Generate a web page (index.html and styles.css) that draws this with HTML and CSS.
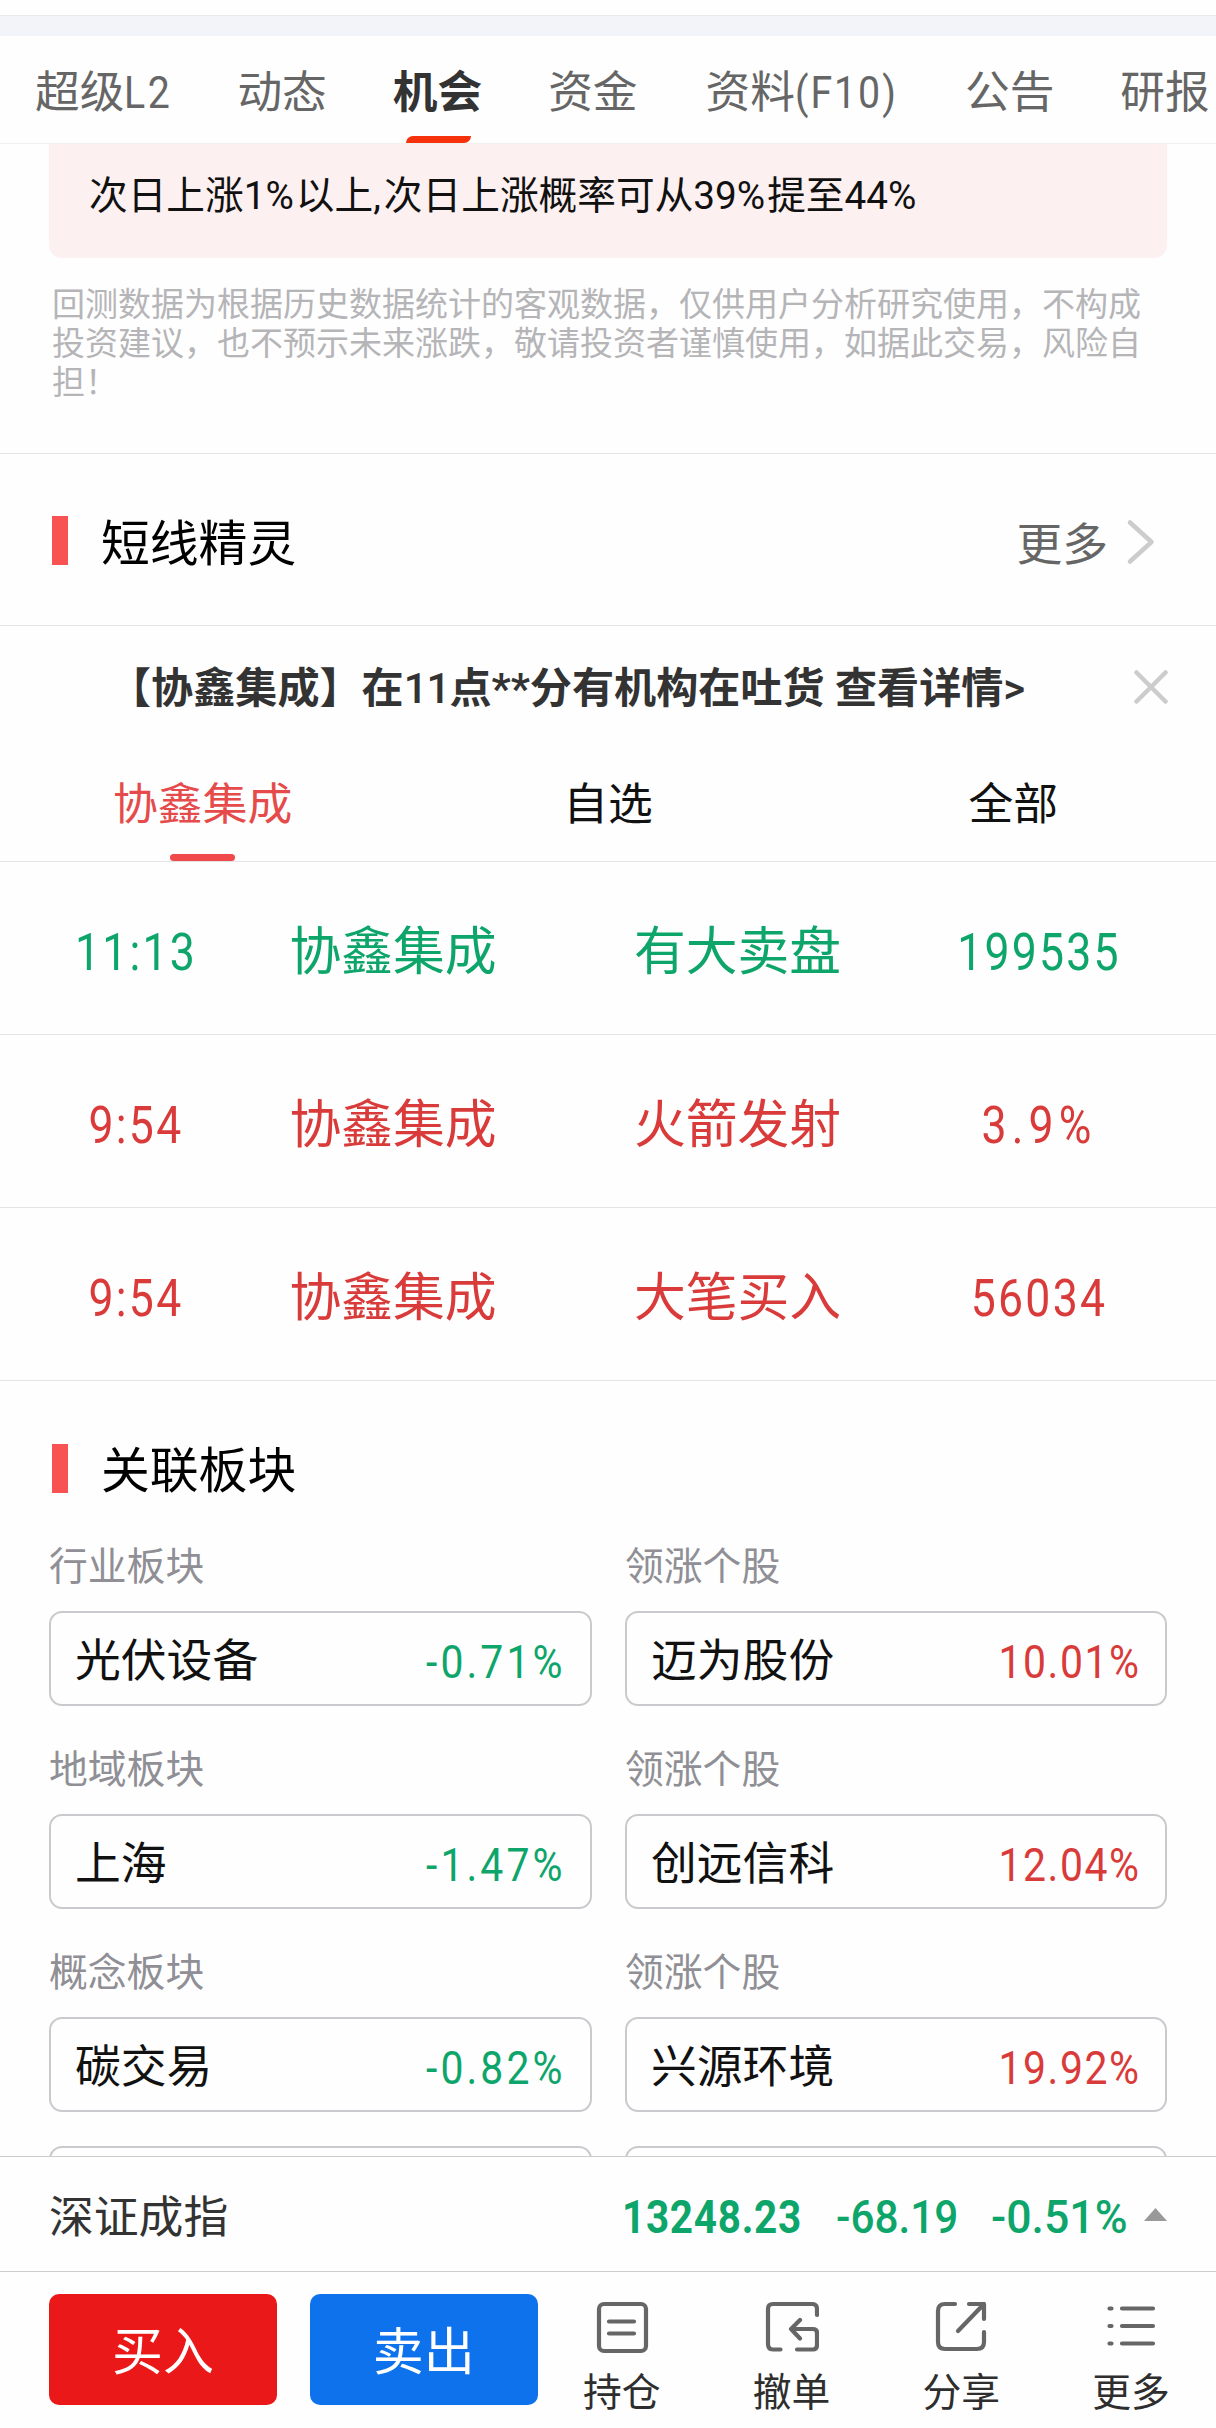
FILE: index.html
```html
<!DOCTYPE html>
<html lang="zh-CN">
<head>
<meta charset="utf-8">
<title>协鑫集成</title>
<link rel="stylesheet" href="styles.css">
</head>
<body>
<div class="app">
  <div class="band"></div>
  <nav class="tabs">
    <span class="tab">超级<span class="lat">L2</span></span>
    <span class="tab">动态</span>
    <span class="tab active">机会</span>
    <span class="tab">资金</span>
    <span class="tab info">资料<span class="lat f10">(F10)</span></span>
    <span class="tab">公告</span>
    <span class="tab">研报</span>
  </nav>

  <main class="content">
    <section class="backtest">
      <div class="tip">次日上涨1<span class="pc">%</span>以上<span class="comma">,</span>次日上涨概率可从39<span class="pc">%</span>提至44<span class="pc">%</span></div>
      <p class="disclaimer">回测数据为根据历史数据统计的客观数据，仅供用户分析研究使用，不构成<br>投资建议，也不预示未来涨跌，敬请投资者谨慎使用，如据此交易，风险自<br>担！</p>
    </section>

    <header class="head">
      <i class="bar"></i><h2>短线精灵</h2>
      <span class="more">更多</span>
      <svg class="chev" width="30" height="48" viewBox="0 0 30 48"><path d="M4 4.500L25.500 24L4 43.500" fill="none" stroke="#ccc" stroke-width="4.500" stroke-linecap="round" stroke-linejoin="round"/></svg>
    </header>

    <div class="notice">
      <span class="notice-text">【协鑫集成】在<span class="m">11</span>点<span class="st">**</span>分有机构在吐货 查看详情<span class="m gt">&gt;</span></span>
      <svg width="34" height="34" viewBox="0 0 34 34"><path d="M2.500 2.500L31.500 31.500M31.500 2.500L2.500 31.500" fill="none" stroke="#ccc" stroke-width="4.500" stroke-linecap="round"/></svg>
    </div>

    <div class="subtabs">
      <span class="sub on">协鑫集成</span><span class="sub">自选</span><span class="sub">全部</span>
    </div>

    <div class="row down"><span class="num">11:13</span><span>协鑫集成</span><span>有大卖盘</span><span class="num">199535</span></div>
    <div class="row up"><span class="num">9:54</span><span>协鑫集成</span><span>火箭发射</span><span class="num wide">3.9%</span></div>
    <div class="row up"><span class="num">9:54</span><span>协鑫集成</span><span>大笔买入</span><span class="num">56034</span></div>

    <header class="head related">
      <i class="bar"></i><h2>关联板块</h2>
    </header>
    <section class="sectors">
      <div class="cell"><label>行业板块</label><div class="card"><span>光伏设备</span><b class="down neg">-0.71%</b></div></div>
      <div class="cell"><label>领涨个股</label><div class="card"><span>迈为股份</span><b class="up">10.01%</b></div></div>
      <div class="cell"><label>地域板块</label><div class="card"><span>上海</span><b class="down neg">-1.47%</b></div></div>
      <div class="cell"><label>领涨个股</label><div class="card"><span>创远信科</span><b class="up">12.04%</b></div></div>
      <div class="cell"><label>概念板块</label><div class="card"><span>碳交易</span><b class="down neg">-0.82%</b></div></div>
      <div class="cell"><label>领涨个股</label><div class="card"><span>兴源环境</span><b class="up">19.92%</b></div></div>
      <div class="card"></div>
      <div class="card"></div>
    </section>
  </main>

  <div class="index">
    <span class="index-name">深证成指</span>
    <span class="v price">13248.23</span>
    <span class="v chg">-68.19</span>
    <span class="v pct">-0.51%</span>
    <svg width="23" height="13" viewBox="0 0 23 13"><path d="M11.500 0L23 13H0z" fill="#999"/></svg>
  </div>

  <footer class="actions">
    <div class="btn buy">买入</div>
    <div class="btn sell">卖出</div>
    <div class="tools">
      <div class="tool">
        <svg width="54" height="54" viewBox="0 0 54 54"><rect x="4" y="4" width="47" height="47" rx="5"/><path d="M14 21.500H39M14 33.500H39"/></svg>
        <span>持仓</span>
      </div>
      <div class="tool">
        <svg width="54" height="54" viewBox="0 0 54 54"><path d="M52 15V9Q52 4 47 4H8Q3 4 3 9V44Q3 49.500 8 49.500H15.500M32 49.500H48Q52 49.500 52 45V33Q52 29 48 29H26M35 20L26 29L35 38.500"/></svg>
        <span>撤单</span>
      </div>
      <div class="tool">
        <svg width="54" height="54" viewBox="0 0 54 54"><path d="M21 4H11Q4 4 4 11V42Q4 49 11 49H43Q50 49 50 42V32M35 4H50V19M50 4L24 31"/></svg>
        <span>分享</span>
      </div>
      <div class="tool">
        <svg width="54" height="54" viewBox="0 0 54 54"><path d="M5.500 8.500H7.500M18 8.500H49M5.500 26H7.500M18 26H49M5.500 43.500H7.500M18 43.500H49"/></svg>
        <span>更多</span>
      </div>
    </div>
  </footer>
</div>
</body>
</html>
```
FILE: styles.css
```css
* { box-sizing: border-box; }
body {
  margin: 0;
  background: #fefefe;
  font-family: Roboto, "Noto Sans CJK SC", sans-serif;
  color: #111;
}
svg { display: block; flex: none; }
.app {
  width: 1216px;
  height: 2428px;
  overflow: hidden;
  display: flex;
  flex-direction: column;
}
.band {
  height: 21px;
  margin-top: 15px;
  flex: none;
  background: #f3f4f9;
  border-top: 1px solid #e8e9ec;
}
.tabs {
  height: 108px;
  flex: none;
  display: flex;
  gap: 66px;
  padding-left: 35px;
  border-bottom: 1px solid #f0f0f0;
  font-size: 44.7px;
  line-height: 114px;
  color: #666;
  white-space: nowrap;
}
.tab { position: relative; height: 107px; }
.tab.active { color: #333; font-weight: 700; }
.tab.active::after {
  content: "";
  position: absolute;
  left: 13px;
  bottom: 0;
  width: 65px;
  height: 7px;
  background: #f5320b;
  border-radius: 7px 0 7px 0;
}
.tab.info { margin-left: 2px; }
.lat { display: inline-block; width: 47px; letter-spacing: 3px; transform: scaleX(.88); transform-origin: left; }
.lat.f10 { width: 104px; letter-spacing: 2.2px; }

.content { height: 2012px; flex: none; overflow: hidden; }
.backtest { height: 309px; padding: 0 49px; }
.tip {
  height: 114px;
  padding-left: 40px;
  border-radius: 0 0 13px 13px;
  background: #fdf0f0;
  font-size: 38.7px;
  line-height: 104px;
  white-space: nowrap;
}
.tip .pc { letter-spacing: 2px; }
.tip .comma { letter-spacing: 3px; }
.disclaimer {
  margin: 28px 0 0 3px;
  font-size: 33px;
  line-height: 38.8px;
  color: #b5b5b8;
  white-space: nowrap;
}
.head {
  height: 173px;
  display: flex;
  align-items: center;
  border-top: 1px solid #e4e4e4;
  border-bottom: 1px solid #e4e4e4;
  padding: 0 60px 0 52px;
}
.bar { width: 16px; height: 49px; margin-top: 1px; background: #f95252; }
.head h2 {
  margin: 11px 0 0 33px;
  font-size: 48.8px;
  line-height: 60px;
  font-weight: 400;
  color: #000;
}
.more { margin: 13px 18px 0 auto; font-size: 45.8px; line-height: 60px; color: #666; }
.chev { margin-top: 5px; }
.notice {
  height: 126px;
  display: flex;
  justify-content: space-between;
  align-items: center;
  padding: 0 48px 0 109px;
  font-size: 42.1px;
  line-height: 60px;
  font-weight: 700;
  color: #333;
  white-space: nowrap;
}
.notice svg { margin-bottom: 4px; }
.m { font-weight: 500; letter-spacing: -1px; }
.notice-text { padding-bottom: 1px; }
.subtabs {
  height: 110px;
  display: flex;
  border-bottom: 1px solid #e4e4e4;
  font-size: 44.8px;
  line-height: 105px;
}
.sub { flex: 1; text-align: center; position: relative; }
.sub.on { color: #e54b4b; }
.sub.on::after {
  content: "";
  position: absolute;
  left: calc(50% - 32.5px);
  bottom: 0;
  width: 65px;
  height: 7px;
  border-radius: 4px;
  background: #f04a4a;
}
.row {
  height: 173px;
  display: grid;
  grid-template-columns: 272px 242px 447px 156px;
  border-bottom: 1px solid #e4e4e4;
  font-size: 51.8px;
  line-height: 181px;
  text-align: center;
  white-space: nowrap;
}
.num { letter-spacing: 2.6px; transform: scaleX(.86); margin: 0 -30px; }
.num.wide { letter-spacing: 6px; }
.down { color: #0ea56b; }
.up { color: #d93b3a; }
.head.related { height: 175px; border: 0; }
.head.related .bar { margin-top: 0; }
.head.related h2 { margin-top: 7px; }
.sectors {
  display: grid;
  grid-template-columns: 543px 542px;
  column-gap: 33px;
  padding-left: 49px;
}
.cell { height: 203px; }
.cell:nth-child(5), .cell:nth-child(6) { height: 184px; }
.cell label {
  display: block;
  height: 55px;
  font-size: 38.8px;
  line-height: 21px;
  color: #8f8f95;
}
.card {
  height: 95px;
  display: flex;
  justify-content: space-between;
  border: 2px solid #c9cacd;
  border-radius: 13px;
  padding: 0 24px;
  font-size: 45.8px;
  line-height: 98px;
}
.card b {
  font-size: 46.5px;
  font-weight: 400;
  letter-spacing: 1.8px;
  transform: scaleX(.88);
  transform-origin: right;
}
.card b.neg { letter-spacing: 3.5px; }

.index {
  height: 116px;
  flex: none;
  display: flex;
  align-items: center;
  border-top: 1px solid #ccc;
  border-bottom: 1px solid #ccc;
  padding: 0 49px;
  line-height: 60px;
  color: #333;
}
.index-name { width: 573px; font-size: 44.8px; padding-top: 8px; }
.v { font-size: 46px; font-weight: 500; color: #0ea56b; transform-origin: left; white-space: nowrap; padding-top: 6px; }
.price { width: 214px; font-weight: 700; letter-spacing: .8px; transform: scaleX(.88); }
.chg { width: 155px; transform: scaleX(.92); }
.pct { width: 153px; transform: scaleX(.97); }

.actions { flex: 1; display: flex; padding: 22px 0 0 49px; }
.btn {
  width: 228px;
  height: 111px;
  margin-right: 33px;
  border-radius: 10px;
  font-size: 51px;
  line-height: 118px;
  text-align: center;
  color: #fff;
}
.buy { background: #ea1819; }
.sell { background: #0e72ed; margin-right: 0; }
.tools { display: flex; margin-left: -1px; }
.tool { width: 169.8px; display: flex; flex-direction: column; align-items: center; padding-top: 6px; }
.tool svg { fill: none; stroke: #666; stroke-width: 4.2; stroke-linecap: round; stroke-linejoin: round; }
.tool span { font-size: 38.8px; line-height: 44px; margin-top: 17px; color: #2e2e2e; }
```
